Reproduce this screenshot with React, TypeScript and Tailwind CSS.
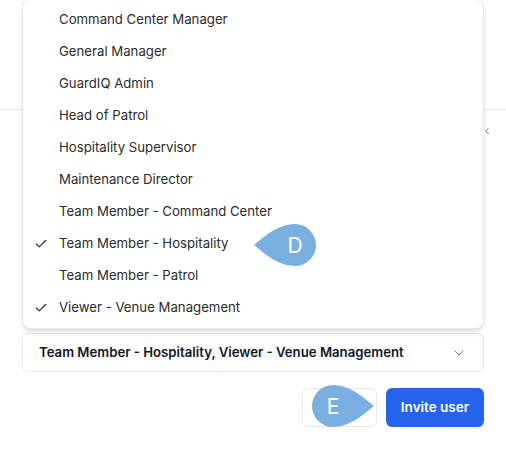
import { Check, ChevronDown, ChevronLeft } from 'lucide-react';

const roles = [
  { name: 'Command Center Manager', on: false },
  { name: 'General Manager', on: false },
  { name: 'GuardIQ Admin', on: false },
  { name: 'Head of Patrol', on: false },
  { name: 'Hospitality Supervisor', on: false },
  { name: 'Maintenance Director', on: false },
  { name: 'Team Member - Command Center', on: false },
  { name: 'Team Member - Hospitality', on: true },
  { name: 'Team Member - Patrol', on: false },
  { name: 'Viewer - Venue Management', on: true },
];

// teardrop callout, tip on the left unless flipped
function Marker({ letter, flip }: { letter: string; flip?: boolean }) {
  return (
    <div className="relative w-[62px] h-[42px]">
      <svg width="62" height="42" viewBox="0 0 62 42" className={flip ? '-scale-x-100' : ''}>
        <path d="M0 21 C 10 13, 22 1, 41 0 A 21 21 0 1 1 41 42 C 22 41, 10 29, 0 21 Z" fill="#7ab0e0" />
      </svg>
      <span
        className={`absolute top-0 h-[42px] w-[42px] flex items-center justify-center text-white text-[21px] leading-none ${flip ? 'left-0' : 'left-[20px]'}`}
      >
        {letter}
      </span>
    </div>
  );
}

export default function App() {
  return (
    <div className="relative h-[450px] w-[506px] overflow-hidden bg-white text-gray-800 font-['Inter','Liberation_Sans',sans-serif]">
      {/* page behind the menu */}
      <div className="h-[110px] border-b border-gray-200"></div>
      <div className="flex justify-end pr-[14px] pt-[16px] h-[223px] text-gray-700">
        <ChevronLeft size={10} strokeWidth={1.75} />
      </div>

      <div className="px-[22px]">
        <div className="flex items-center justify-between h-[39px] rounded-md border border-gray-200 pl-4 pr-4">
          <span className="text-[13.2px] font-semibold text-gray-900">Team Member - Hospitality, Viewer - Venue Management</span>
          <ChevronDown size={16} strokeWidth={1.5} className="text-gray-500" />
        </div>

        <div className="flex justify-end gap-[9px] mt-4">
          <button className="h-[39px] w-[75px] rounded-md border border-gray-200 text-[13.2px] font-semibold text-gray-800">Cancel</button>
          <button className="h-[39px] w-[98px] rounded-md bg-[#2563eb] text-[13.5px] font-semibold text-white">Invite user</button>
        </div>
      </div>

      {/* open dropdown */}
      <div className="absolute left-[22px] top-[-1px] w-[462px] rounded-lg border border-gray-200 bg-white shadow-md pt-[4px] pb-[4px]">
        {roles.map((r) => (
          <div key={r.name} className="flex items-center h-[32px] text-[13.2px] text-[#2b2b2b]">
            <span className="w-[36px] flex justify-end pr-[11px]">
              {r.on && <Check size={14} strokeWidth={2} />}
            </span>
            <span>{r.name}</span>
          </div>
        ))}
      </div>

      <div className="absolute left-[254px] top-[224px]">
        <Marker letter="D" />
      </div>
      <div className="absolute left-[312px] top-[385px]">
        <Marker letter="E" flip />
      </div>
    </div>
  );
}
